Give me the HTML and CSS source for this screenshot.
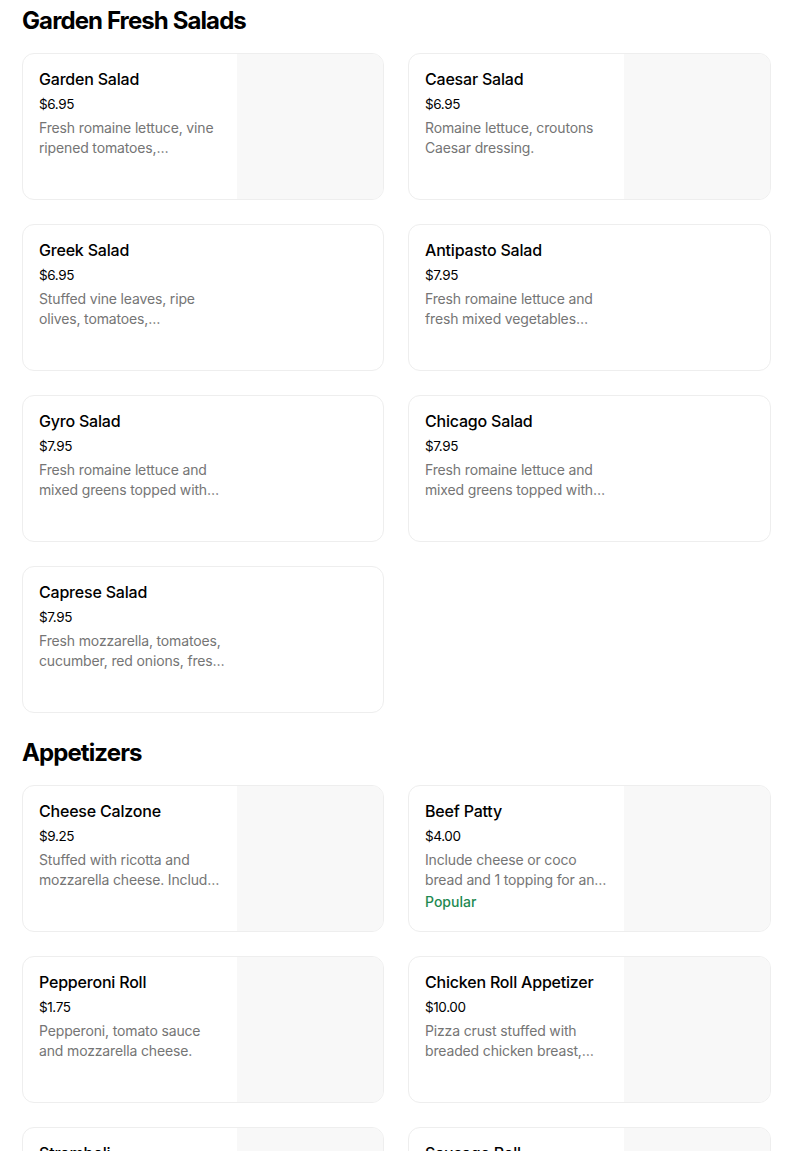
FILE: index.html
```html
<!DOCTYPE html>
<html>
<head>
<meta charset="utf-8">
<link rel="stylesheet" href="styles.css">
</head>
<body>
<main class="menu">
  <section class="section">
    <h2 class="section-title">Garden Fresh Salads</h2>
    <div class="grid">
      <div class="card">
        <div class="info">
          <div class="name">Garden Salad</div>
          <div class="price">$6.95</div>
          <div class="desc">Fresh romaine lettuce, vine ripened tomatoes, cucumbers, red onions and croutons.</div>
        </div>
        <div class="thumb"></div>
      </div>
      <div class="card">
        <div class="info">
          <div class="name">Caesar Salad</div>
          <div class="price">$6.95</div>
          <div class="desc">Romaine lettuce, croutons Caesar dressing.</div>
        </div>
        <div class="thumb"></div>
      </div>
      <div class="card">
        <div class="info">
          <div class="name">Greek Salad</div>
          <div class="price">$6.95</div>
          <div class="desc">Stuffed vine leaves, ripe olives, tomatoes, cucumbers, feta cheese.</div>
        </div>
      </div>
      <div class="card">
        <div class="info">
          <div class="name">Antipasto Salad</div>
          <div class="price">$7.95</div>
          <div class="desc">Fresh romaine lettuce and fresh mixed vegetables topped with ham, salami.</div>
        </div>
      </div>
      <div class="card">
        <div class="info">
          <div class="name">Gyro Salad</div>
          <div class="price">$7.95</div>
          <div class="desc">Fresh romaine lettuce and mixed greens topped with gyro meat.</div>
        </div>
      </div>
      <div class="card">
        <div class="info">
          <div class="name">Chicago Salad</div>
          <div class="price">$7.95</div>
          <div class="desc">Fresh romaine lettuce and mixed greens topped with grilled chicken.</div>
        </div>
      </div>
      <div class="card">
        <div class="info">
          <div class="name">Caprese Salad</div>
          <div class="price">$7.95</div>
          <div class="desc">Fresh mozzarella, tomatoes, cucumber, red onions, fresh basil.</div>
        </div>
      </div>
    </div>
  </section>
  <section class="section">
    <h2 class="section-title">Appetizers</h2>
    <div class="grid">
      <div class="card">
        <div class="info">
          <div class="name">Cheese Calzone</div>
          <div class="price">$9.25</div>
          <div class="desc">Stuffed with ricotta and mozzarella cheese. Includes marinara sauce.</div>
        </div>
        <div class="thumb"></div>
      </div>
      <div class="card">
        <div class="info">
          <div class="name">Beef Patty</div>
          <div class="price">$4.00</div>
          <div class="desc">Include cheese or coco bread and 1 topping for an additional charge.</div>
          <div class="tag">Popular</div>
        </div>
        <div class="thumb"></div>
      </div>
      <div class="card">
        <div class="info">
          <div class="name">Pepperoni Roll</div>
          <div class="price">$1.75</div>
          <div class="desc">Pepperoni, tomato sauce and mozzarella cheese.</div>
        </div>
        <div class="thumb"></div>
      </div>
      <div class="card">
        <div class="info">
          <div class="name">Chicken Roll Appetizer</div>
          <div class="price">$10.00</div>
          <div class="desc">Pizza crust stuffed with breaded chicken breast, mozzarella cheese.</div>
        </div>
        <div class="thumb"></div>
      </div>
      <div class="card">
        <div class="info">
          <div class="name">Stromboli</div>
          <div class="price">$9.25</div>
          <div class="desc">Ham, salami, mozzarella cheese.</div>
        </div>
        <div class="thumb"></div>
      </div>
      <div class="card">
        <div class="info">
          <div class="name">Sausage Roll</div>
          <div class="price">$1.75</div>
          <div class="desc">Sausage, tomato sauce and mozzarella cheese.</div>
        </div>
        <div class="thumb"></div>
      </div>
    </div>
  </section>
</main>
</body>
</html>
```

FILE: styles.css
```css
* { box-sizing: border-box; }
html, body { margin: 0; padding: 0; background: #fff; }
body {
  font-family: Inter, "Liberation Sans", sans-serif;
  color: #000;
}
.menu {
  width: 749px;
  margin-left: 22px;
}
.section {
  padding-top: 5px;
  padding-bottom: 19px;
}
.section-title {
  margin: 0 0 16px 0;
  font-size: 24px;
  line-height: 32px;
  font-weight: 700;
  letter-spacing: -0.9px;
}
.grid {
  display: grid;
  grid-template-columns: 362px 363px;
  column-gap: 24px;
  row-gap: 24px;
}
.card {
  display: flex;
  height: 147px;
  border: 1px solid #eeeeee;
  border-radius: 12px;
  overflow: hidden;
  background: #fff;
}
.info {
  flex: 1;
  min-width: 0;
  padding: 15px 12px 0 16px;
}
.name {
  font-size: 16px;
  line-height: 20px;
  font-weight: 500;
  color: #000;
  letter-spacing: -0.2px;
}
.price {
  margin-top: 5px;
  font-size: 13.5px;
  line-height: 20px;
  color: #000;
  letter-spacing: -0.4px;
}
.desc {
  margin-top: 4px;
  width: 186px;
  font-size: 14px;
  line-height: 20px;
  color: #757575;
  letter-spacing: -0.15px;
  display: -webkit-box;
  -webkit-line-clamp: 2;
  -webkit-box-orient: vertical;
  overflow: hidden;
}
.tag {
  margin-top: 2px;
  font-size: 14px;
  line-height: 20px;
  font-weight: 500;
  color: #1e8a52;
}
.thumb {
  width: 146px;
  height: 100%;
  background: #f8f8f8;
  flex: none;
}
```
